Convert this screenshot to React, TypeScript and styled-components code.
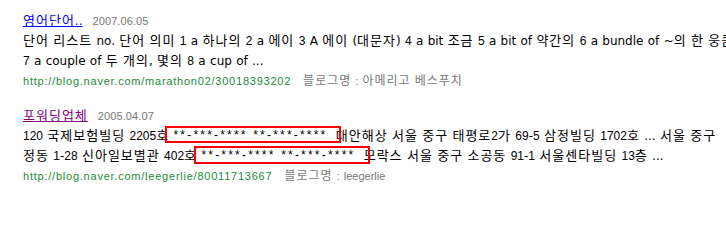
import React from "react";
import styled, { createGlobalStyle } from "styled-components";

const Global = createGlobalStyle`
  html, body { margin: 0; padding: 0; background: #fff; }
  body { overflow: hidden; width: 726px; height: 220px; }
`;

const List = styled.div`
  padding: 10px 0 0 23px;
  font-family: "DejaVu Sans", "Noto Sans CJK KR", sans-serif;
  color: #000;
`;

const Item = styled.div`
  margin-bottom: 16px;
`;

const TitleRow = styled.div`
  display: flex;
  align-items: baseline;
  height: 20px;
  line-height: 20px;
  white-space: nowrap;
`;

const TitleLink = styled.a<{ $visited?: boolean }>`
  font-size: 12px;
  color: ${(p) => (p.$visited ? "#800080" : "#0000ff")};
  text-decoration: underline;
`;

const DateText = styled.span`
  margin-left: 10px;
  font-family: "Liberation Sans", sans-serif;
  font-size: 11px;
  letter-spacing: 0.1px;
  color: #777;
`;

const Line = styled.div`
  font-size: 12px;
  line-height: 20px;
  height: 20px;
  white-space: nowrap;
  word-spacing: 0.5px;
`;

const Meta = styled.div`
  font-family: "Liberation Sans", "Noto Sans CJK KR", sans-serif;
  font-size: 11px;
  line-height: 19px;
  height: 19px;
  white-space: nowrap;
`;

const Url = styled.span`
  color: #228b3a;
  letter-spacing: 0.77px;
`;

const BlogName = styled.span`
  margin-left: 12px;
  color: #777;
  word-spacing: 1px;
`;

const Hangul = styled.span<{ $size: number }>`
  font-family: "Noto Sans CJK KR", sans-serif;
  font-size: ${(p) => p.$size}px;
  letter-spacing: 1px;
  word-spacing: 0;
`;

const Digits = styled.span`
  font-family: "Liberation Sans", sans-serif;
`;

const Masked = styled.span<{ $l: number; $r: number; $b: number }>`
  position: relative;
  display: inline-block;
  height: 20px;
  margin-right: 4px;
  vertical-align: top;
  font-family: "Liberation Sans", sans-serif;
  letter-spacing: 2.2px;
  word-spacing: 0;
  &::after {
    content: "";
    position: absolute;
    left: ${(p) => -p.$l}px;
    right: ${(p) => -p.$r}px;
    top: 1px;
    bottom: ${(p) => p.$b}px;
    border: 2px solid #ff0000;
    pointer-events: none;
  }
`;

const HANGUL = /^[\uAC00-\uD7A3\u3131-\u318E]+$/;

function seg(text: string, size: number, digits = true): React.ReactNode[] {
  const re = digits
    ? /([\uAC00-\uD7A3\u3131-\u318E]+|[0-9]+)/
    : /([\uAC00-\uD7A3\u3131-\u318E]+)/;
  return text.split(re).map((part, i) => {
    if (!part) return null;
    if (HANGUL.test(part))
      return (
        <Hangul key={i} $size={size}>
          {part}
        </Hangul>
      );
    if (digits && /^[0-9]+$/.test(part)) return <Digits key={i}>{part}</Digits>;
    return part;
  });
}

export default function App() {
  return (
    <>
      <Global />
      <List>
        <Item>
          <TitleRow>
            <TitleLink href="#">{seg("영어단어..", 13, false)}</TitleLink>
            <DateText>2007.06.05</DateText>
          </TitleRow>
          <Line>
            {seg(
              "단어 리스트 no. 단어 의미 1 a 하나의 2 a 에이 3 A 에이 (대문자) 4 a bit 조금 5 a bit of 약간의 6 a bundle of ~의 한 웅큼",
              13
            )}
          </Line>
          <Line>{seg("7 a couple of 두 개의, 몇의 8 a cup of ...", 13)}</Line>
          <Meta>
            <Url>http://blog.naver.com/marathon02/30018393202</Url>
            <BlogName>{seg("블로그명 : 아메리고 베스푸치", 12, false)}</BlogName>
          </Meta>
        </Item>
        <Item>
          <TitleRow>
            <TitleLink href="#" $visited>
              {seg("포워딩업체", 13, false)}
            </TitleLink>
            <DateText>2005.04.07</DateText>
          </TitleRow>
          <Line>
            {seg("120 국제보험빌딩 2205호 ", 13)}
            <Masked $l={8} $r={14} $b={2}>
              **-***-**** **-***-****
            </Masked>
            {seg(" 대안해상 서울 중구 태평로2가 69-5 삼정빌딩 1702호 ... 서울 중구", 13)}
          </Line>
          <Line>
            {seg("정동 1-28 신아일보별관 402호 ", 13)}
            <Masked $l={7} $r={15} $b={1}>
              **-***-**** **-***-****
            </Masked>
            {seg(" 모락스 서울 중구 소공동 91-1 서울센타빌딩 13층 ...", 13)}
          </Line>
          <Meta>
            <Url>http://blog.naver.com/leegerlie/80011713667</Url>
            <BlogName>{seg("블로그명 : leegerlie", 12, false)}</BlogName>
          </Meta>
        </Item>
      </List>
    </>
  );
}
